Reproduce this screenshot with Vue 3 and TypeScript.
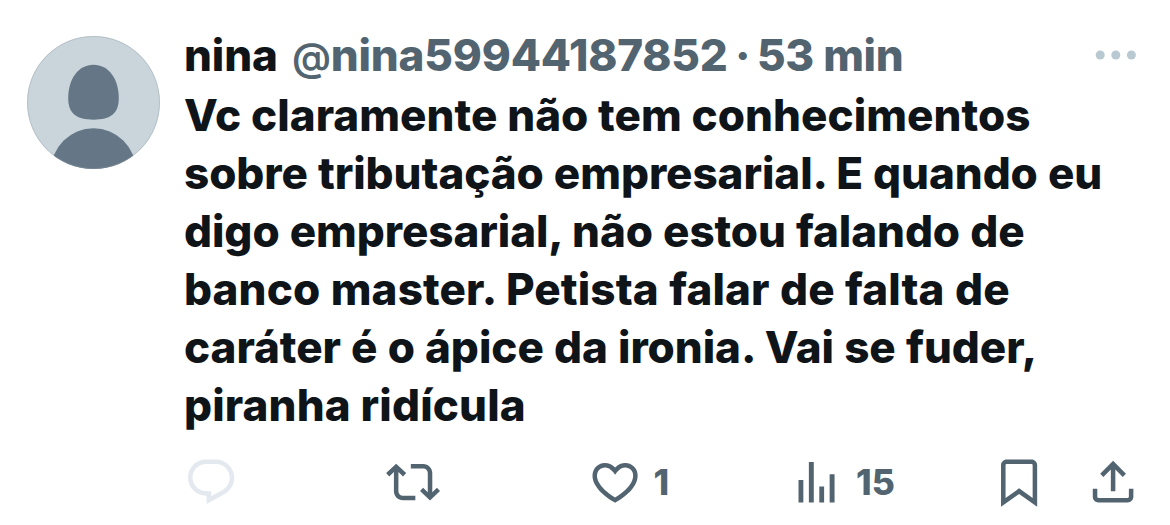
<script setup lang="ts">
interface Line { id: string; text: string }

const author = { name: 'nina', handle: 'nina59944187852', age: '53 min' }

const lines: Line[] = [
  { id: 'l1', text: 'Vc claramente não tem conhecimentos' },
  { id: 'l2', text: 'sobre tributação empresarial. E quando eu' },
  { id: 'l3', text: 'digo empresarial, não estou falando de' },
  { id: 'l4', text: 'banco master. Petista falar de falta de' },
  { id: 'l5', text: 'caráter é o ápice da ironia. Vai se fuder,' },
  { id: 'l6', text: 'piranha ridícula' },
]

const likes = 1
const views = 15
</script>

<template>
  <article class="tweet">
    <svg class="avatar" viewBox="-0.5 -0.5 135 135" aria-hidden="true">
      <defs>
        <clipPath id="avatar-clip"><circle cx="67" cy="67" r="66.5" /></clipPath>
      </defs>
      <g clip-path="url(#avatar-clip)">
        <rect width="134" height="134" fill="#cad5db" />
        <path d="M67 29.3C82 29.3 92.3 43.3 92.3 62.8C92.3 78 84 84.2 67 84.2S41.7 78 41.7 62.8C41.7 43.3 52 29.3 67 29.3z" fill="#657786" />
        <circle cx="67" cy="135.3" r="42.5" fill="#657786" />
      </g>
      <circle cx="67" cy="67" r="66" fill="none" stroke="#8b98a1" stroke-opacity=".35" />
    </svg>

    <div class="content">
      <header class="head">
        <span class="name">{{ author.name }}</span>
        <span class="handle"><span class="at">@</span>{{ author.handle }}</span>
        <span class="dot">·</span>
        <span class="age">{{ author.age }}</span>
        <svg class="more" viewBox="0 0 42 10" aria-hidden="true">
          <circle cx="5.2" cy="5" r="4.5" />
          <circle cx="20.8" cy="5" r="4.5" />
          <circle cx="36.4" cy="5" r="4.5" />
        </svg>
      </header>

      <p class="body">
        <span v-for="line in lines" :key="line.id" class="line" :class="line.id">{{ line.text }}</span>
      </p>

      <footer class="actions">
        <div class="action reply">
          <svg class="icon" viewBox="0 0 24 24" aria-hidden="true"><path d="M1.751 10c0-4.42 3.584-8 8.005-8h4.366c4.49 0 8.129 3.64 8.129 8.13 0 2.96-1.607 5.68-4.196 7.11l-8.054 4.46v-3.69h-.067c-4.49.1-8.183-3.51-8.183-8.01zm8.005-6c-3.317 0-6.005 2.69-6.005 6 0 3.37 2.77 6.08 6.138 6.01l.351-.01h1.761v2.3l5.087-2.81c1.951-1.08 3.163-3.13 3.163-5.36 0-3.39-2.744-6.13-6.129-6.13H9.756z" /></svg>
        </div>
        <div class="action repost">
          <svg class="icon" viewBox="0 0 24 24" aria-hidden="true"><path d="M4.5 3.88l4.432 4.14-1.364 1.46L5.5 7.55V16c0 1.1.896 2 2 2H13v2H7.5c-2.209 0-4-1.79-4-4V7.55L1.432 9.48.068 8.02 4.5 3.88zM16.5 6H11V4h5.5c2.209 0 4 1.79 4 4v8.45l2.068-1.93 1.364 1.46-4.432 4.14-4.432-4.14 1.364-1.46 2.068 1.93V8c0-1.1-.896-2-2-2z" /></svg>
        </div>
        <div class="action like">
          <svg class="icon" viewBox="0 0 24 24" aria-hidden="true"><path d="M16.697 5.5c-1.222-.06-2.679.51-3.89 2.16l-.805 1.09-.806-1.09C9.984 6.01 8.526 5.44 7.304 5.5c-1.243.07-2.349.78-2.91 1.91-.552 1.12-.633 2.78.479 4.82 1.074 1.97 3.257 4.27 7.129 6.61 3.87-2.34 6.052-4.64 7.126-6.61 1.111-2.04 1.03-3.7.477-4.82-.561-1.13-1.666-1.84-2.908-1.91zm4.187 7.69c-1.351 2.48-4.001 5.12-8.379 7.67l-.503.3-.504-.3c-4.379-2.55-7.029-5.19-8.382-7.67-1.36-2.5-1.41-4.86-.514-6.67.887-1.79 2.647-2.91 4.601-3.01 1.651-.09 3.368.56 4.798 2.01 1.429-1.45 3.146-2.1 4.796-2.01 1.954.1 3.714 1.22 4.601 3.01.896 1.81.846 4.17-.514 6.67z" /></svg>
          <span class="count">{{ likes }}</span>
        </div>
        <div class="action views">
          <svg class="icon" viewBox="0 0 54 54" aria-hidden="true"><path d="M8.5 24.9h4.8v22.4H8.5zM18.8 7h4.9v40.3h-4.9zM29.2 31.3h4.8v16h-4.8zM39.5 19.1h4.9v28.2h-4.9z" /></svg>
          <span class="count">{{ views }}</span>
        </div>
        <div class="action bookmark">
          <svg class="icon" viewBox="0 0 24 24" aria-hidden="true"><path d="M4 4.5C4 3.12 5.119 2 6.5 2h11C18.881 2 20 3.12 20 4.5v18.44l-8-5.71-8 5.71V4.5zM6.5 4c-.276 0-.5.22-.5.5v14.56l6-4.29 6 4.29V4.5c0-.28-.224-.5-.5-.5h-11z" /></svg>
        </div>
        <div class="action share">
          <svg class="icon" viewBox="0 0 24 24" aria-hidden="true"><path d="M12 2.59l5.7 5.7-1.41 1.42L13 6.41V16h-2V6.41l-3.3 3.3-1.41-1.42L12 2.59zM21 15l-.02 3.51c0 1.38-1.12 2.49-2.5 2.49H5.5C4.11 21 3 19.88 3 18.5V15h2v3.5c0 .28.22.5.5.5h12.98c.28 0 .5-.22.5-.5L19 15h2z" /></svg>
        </div>
      </footer>
    </div>
  </article>
</template>

<style>
body {
  background: #fff;
}
</style>

<style scoped>
.tweet {
  box-sizing: border-box;
  width: 1170px;
  height: 525px;
  padding: 26px 0 0 26px;
  display: flex;
  background: #fff;
  color: #0f1419;
  font-family: Inter, "Liberation Sans", sans-serif;
  font-weight: 800;
  font-size: 44px;
  overflow: hidden;
}
.avatar {
  flex: none;
  width: 135px;
  height: 135px;
  margin-top: 9px;
}
.content {
  flex: 1;
  margin-left: 22px;
}
.head {
  display: flex;
  align-items: center;
  height: 58px;
  line-height: 58px;
  white-space: nowrap;
  color: #536471;
}
.name {
  color: #0f1419;
  width: 108px;
  margin-left: 1px;
  letter-spacing: -0.1px;
}
.handle {
  width: 443px;
  letter-spacing: -0.18px;
}
.at {
  display: inline-block;
  font-size: 39px;
  font-weight: 600;
  line-height: 1;
}
.dot {
  width: 22px;
}
.age {
  letter-spacing: -0.35px;
}
.more {
  width: 42px;
  height: 10px;
  margin: 0 33px 0 auto;
  fill: #b9c9d1;
}
.body {
  margin: 2px 0 0 1px;
}
.line {
  display: block;
  height: 58px;
  line-height: 58px;
  white-space: nowrap;
}
.l1 { letter-spacing: 0.05px; }
.l2 { letter-spacing: -0.08px; word-spacing: 0.6px; }
.l3 { letter-spacing: -0.08px; word-spacing: 0.6px; }
.l4 { letter-spacing: 0.12px; word-spacing: 0.6px; }
.l5 { letter-spacing: -0.05px; word-spacing: 0.6px; }
.l6 { letter-spacing: 0.14px; }
.actions {
  display: flex;
  margin-top: 21.2px;
  color: #536471;
}
.action {
  flex: none;
  display: flex;
  align-items: center;
  height: 54px;
}
.icon {
  flex: none;
  width: 54.2px;
  height: 54.2px;
  fill: currentColor;
}
.reply { width: 202.1px; margin-left: 0.7px; color: #e3e9ee; }
.repost { width: 202.1px; }
.like { width: 202.5px; }
.views { width: 201.5px; }
.bookmark { width: 93.9px; }
.count {
  font-size: 35.5px;
  line-height: 54px;
  margin: 2px 0 0 11.5px;
}
</style>
